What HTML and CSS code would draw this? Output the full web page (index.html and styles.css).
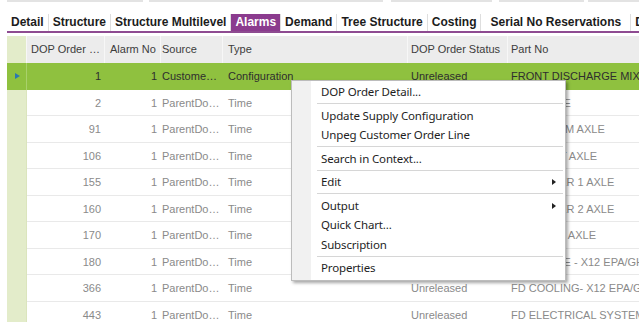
FILE: index.html
```html
<!DOCTYPE html>
<html lang="en">
<head>
    <meta charset="UTF-8">
    <title>DOP Order Alarms</title>
    <link rel="stylesheet" href="styles.css">
</head>
<body>
    <div class="page">
        <div class="toolbar">
            <span></span><span></span><span></span><span></span><span></span>
        </div>
        <ul class="tabs">
            <li>Detail</li>
            <li>Structure</li>
            <li>Structure Multilevel</li>
            <li class="current">Alarms</li>
            <li>Demand</li>
            <li>Tree Structure</li>
            <li>Costing</li>
            <li class="wide">Serial No Reservations</li>
            <li>DOP Headers</li>
        </ul>

        <div class="grid">
            <div class="row head">
                <div class="cell ind"></div>
                <div class="cell c1">DOP Order No</div>
                <div class="cell c2">Alarm No</div>
                <div class="cell c3">Source</div>
                <div class="cell c4">Type</div>
                <div class="cell c5">DOP Order Status</div>
                <div class="cell c6">Part No</div>
            </div>
            <div class="row sel">
                <div class="cell ind"><i class="arrow"></i></div>
                <div class="cell c1 num">1</div>
                <div class="cell c2 num">1</div>
                <div class="cell c3">Customer Order</div>
                <div class="cell c4">Configuration</div>
                <div class="cell c5">Unreleased</div>
                <div class="cell c6">FRONT DISCHARGE MIXER</div>
            </div>
            <div class="row">
                <div class="cell ind"></div>
                <div class="cell c1 num">2</div>
                <div class="cell c2 num">1</div>
                <div class="cell c3">ParentDopOrder</div>
                <div class="cell c4">Time</div>
                <div class="cell c5">Unreleased</div>
                <div class="cell c6">FD ENGINE</div>
            </div>
            <div class="row">
                <div class="cell ind"></div>
                <div class="cell c1 num">91</div>
                <div class="cell c2 num">1</div>
                <div class="cell c3">ParentDopOrder</div>
                <div class="cell c4">Time</div>
                <div class="cell c5">Unreleased</div>
                <div class="cell c6">FD TANDEM AXLE</div>
            </div>
            <div class="row">
                <div class="cell ind"></div>
                <div class="cell c1 num">106</div>
                <div class="cell c2 num">1</div>
                <div class="cell c3">ParentDopOrder</div>
                <div class="cell c4">Time</div>
                <div class="cell c5">Unreleased</div>
                <div class="cell c6">FD FRONT AXLE</div>
            </div>
            <div class="row">
                <div class="cell ind"></div>
                <div class="cell c1 num">155</div>
                <div class="cell c2 num">1</div>
                <div class="cell c3">ParentDopOrder</div>
                <div class="cell c4">Time</div>
                <div class="cell c5">Unreleased</div>
                <div class="cell c6">FD PUSHER 1 AXLE</div>
            </div>
            <div class="row">
                <div class="cell ind"></div>
                <div class="cell c1 num">160</div>
                <div class="cell c2 num">1</div>
                <div class="cell c3">ParentDopOrder</div>
                <div class="cell c4">Time</div>
                <div class="cell c5">Unreleased</div>
                <div class="cell c6">FD PUSHER 2 AXLE</div>
            </div>
            <div class="row">
                <div class="cell ind"></div>
                <div class="cell c1 num">170</div>
                <div class="cell c2 num">1</div>
                <div class="cell c3">ParentDopOrder</div>
                <div class="cell c4">Time</div>
                <div class="cell c5">Unreleased</div>
                <div class="cell c6">FD STEER AXLE</div>
            </div>
            <div class="row">
                <div class="cell ind"></div>
                <div class="cell c1 num">180</div>
                <div class="cell c2 num">1</div>
                <div class="cell c3">ParentDopOrder</div>
                <div class="cell c4">Time</div>
                <div class="cell c5">Unreleased</div>
                <div class="cell c6">FD ENGINE - X12 EPA/GHG 2021</div>
            </div>
            <div class="row">
                <div class="cell ind"></div>
                <div class="cell c1 num">366</div>
                <div class="cell c2 num">1</div>
                <div class="cell c3">ParentDopOrder</div>
                <div class="cell c4">Time</div>
                <div class="cell c5">Unreleased</div>
                <div class="cell c6">FD COOLING- X12 EPA/GHG 2021</div>
            </div>
            <div class="row">
                <div class="cell ind"></div>
                <div class="cell c1 num">443</div>
                <div class="cell c2 num">1</div>
                <div class="cell c3">ParentDopOrder</div>
                <div class="cell c4">Time</div>
                <div class="cell c5">Unreleased</div>
                <div class="cell c6">FD ELECTRICAL SYSTEM</div>
            </div>
        </div>

        <!-- right-click menu over the grid -->
        <div class="menu">
            <div class="item">DOP Order Detail...</div>
            <div class="sep"></div>
            <div class="item">Update Supply Configuration</div>
            <div class="item">Unpeg Customer Order Line</div>
            <div class="sep"></div>
            <div class="item">Search in Context...</div>
            <div class="sep"></div>
            <div class="item sub">Edit</div>
            <div class="sep"></div>
            <div class="item sub">Output</div>
            <div class="item">Quick Chart...</div>
            <div class="item">Subscription</div>
            <div class="sep"></div>
            <div class="item">Properties</div>
        </div>
    </div>
</body>
</html>
```

FILE: styles.css
```css
*{
    margin: 0;
    padding: 0;
    box-sizing: border-box;
}
body{
    font-family: "Liberation Sans", Arial, sans-serif;
    background-color: #fff;
    overflow: hidden;
}
.page{
    position: relative;
    width: 639px;
    height: 322px;
    overflow: hidden;
    padding-left: 7px;
}

/* thin strip of the toolbar above */
.toolbar{
    display: flex;
    height: 2px;
    margin-bottom: 12px;
}
.toolbar span{
    flex: none;
    height: 2px;
    background-color: #e3e3e3;
}
.toolbar span:nth-child(1){ width: 136px; margin-right: 6px; }
.toolbar span:nth-child(2){ width: 234px; margin-right: 8px; }
.toolbar span:nth-child(3){ width: 101px; margin-right: 7px; }
.toolbar span:nth-child(4){ width: 85px; margin-right: 4px; }
.toolbar span:nth-child(5){ width: 60px; }

/* tabs */
.tabs{
    display: flex;
    width: 720px;
    height: 19px;
    border-bottom: 2px solid #8e4b91;
}
.tabs>li{
    list-style: none;
    flex: none;
    padding: 0 4px;
    line-height: 17px;
    font-size: 12px;
    font-weight: bold;
    color: #1c1c1c;
    white-space: nowrap;
    border-right: 1px solid #dedede;
}
.tabs>li.wide{
    padding: 0 9px;
}
.tabs>li.current{
    background-color: #8b3b8e;
    color: #fff;
}

/* grid */
.grid{
    margin-top: 3px;
    width: 820px;
    font-size: 11px;
}
.row{
    display: grid;
    grid-template-columns: 20px 78px 56px 62px 185px 100px 300px;
    height: 26.5px;
    color: #8a8a8a;
}
.cell{
    line-height: 26px;
    white-space: nowrap;
    overflow: hidden;
    text-overflow: ellipsis;
    border-bottom: 1px solid #e9e9e9;
}
.row.head{
    height: 27px;
    background-color: #ececec;
    color: #3c3c3c;
}
.row.head .cell{
    line-height: 27px;
    border-bottom: none;
    border-right: 1px solid #f7f7f7;
}
.num{
    text-align: right;
}
.c1{ padding: 0 4px; }
.c2{ padding: 0 4px 0 5px; }
.c3{ padding: 0 3px 0 1px; }
.c4{ padding: 0 4px 0 5px; }
.c5{ padding: 0 4px 0 3px; }
.c6{ padding: 0 4px 0 3px; text-overflow: clip; }

.ind{
    position: relative;
    background-color: #e3ecca;
    border-bottom: none;
    border-right: 1px solid #dbe5bd;
}
.row.sel{
    background-color: #8fc13f;
    color: #2e2e2e;
}
.row.sel .cell{
    border-bottom-color: #8fc13f;
}
.row.sel .ind{
    background-color: #8fc13f;
    border-right-color: #a9d16b;
}
.arrow{
    position: absolute;
    left: 8px;
    top: 10px;
    width: 0;
    height: 0;
    border-left: 5px solid #2c78b0;
    border-top: 3px solid transparent;
    border-bottom: 3px solid transparent;
}

/* context menu */
.menu{
    position: absolute;
    left: 291px;
    top: 80px;
    width: 275px;
    padding: 1px 2px 2px 0;
    border: 1px solid #bcbcbc;
    background: linear-gradient(to right, #f1f1f1 19px, #fff 19px);
    box-shadow: 2px 2px 3px rgba(0, 0, 0, 0.35);
    font-family: "Noto Sans", "Liberation Sans", sans-serif;
    font-size: 11.5px;
    letter-spacing: -0.15px;
    color: #1e1e1e;
}
.item{
    position: relative;
    height: 19.5px;
    line-height: 19.5px;
    padding-left: 29px;
    white-space: nowrap;
}
.item.sub::after{
    content: "";
    position: absolute;
    right: 7px;
    top: 7px;
    width: 0;
    height: 0;
    border-left: 4px solid #222;
    border-top: 3px solid transparent;
    border-bottom: 3px solid transparent;
}
.sep{
    height: 1px;
    margin: 1.5px 0 1.5px 25px;
    background-color: #d6d6d6;
}
```
